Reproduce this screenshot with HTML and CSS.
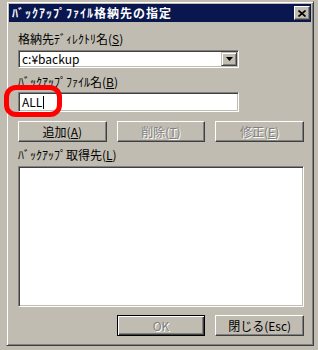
FILE: index.html
```html
<!DOCTYPE html>
<html lang="ja">
<head>
    <meta charset="UTF-8">
    <title>ﾊﾞｯｸｱｯﾌﾟﾌｧｲﾙ格納先の指定</title>
    <link rel="stylesheet" href="styles.css">
</head>
<body>

    <div class="window">
        <div class="caption">
            <span class="caption-title">ﾊﾞｯｸｱｯﾌﾟﾌｧｲﾙ格納先の指定</span>
            <span class="caption-close">
                <svg width="8" height="7" viewBox="0 0 8 7">
                    <path d="M0.5 0.5 L7.5 6.5 M7.5 0.5 L0.5 6.5" stroke="#000" stroke-width="1.6" fill="none"/>
                </svg>
            </span>
        </div>

        <div class="dialog">
            <div class="label">格納先ﾃﾞｨﾚｸﾄﾘ名(<u>S</u>)</div>
            <div class="combo sunken">
                <span class="combo-text">c:¥backup</span>
                <span class="combo-btn">
                    <svg width="7" height="4" viewBox="0 0 7 4"><polygon points="0,0 7,0 3.5,4" fill="#000"/></svg>
                </span>
            </div>

            <div class="label label-second">ﾊﾞｯｸｱｯﾌﾟﾌｧｲﾙ名(<u>B</u>)</div>
            <div class="textbox sunken">ALL<span class="caret"></span></div>

            <div class="btn-row">
                <div class="btn">追加(<u>A</u>)</div>
                <div class="btn disabled">削除(<u>T</u>)</div>
                <div class="btn disabled">修正(<u>E</u>)</div>
            </div>

            <div class="label label-third">ﾊﾞｯｸｱｯﾌﾟ取得先(<u>L</u>)</div>
            <div class="listbox sunken"></div>

            <div class="btn-row btn-row-bottom">
                <div></div>
                <div class="btn btn-default disabled">OK</div>
                <div class="btn">閉じる(Esc)</div>
            </div>
        </div>
    </div>

    <div class="highlight"></div>

</body>
</html>
```

FILE: styles.css
```css
body {
    margin: 0;
    background: #c0bcb1;
    font-family: "Noto Sans CJK JP", "Liberation Sans", sans-serif;
    font-size: 12px;
    color: #000;
    height: 350px;
    overflow: hidden;
    position: relative;
}
.window {
    margin: 1px 0 0 6px;
    width: 308px;
    box-sizing: border-box;
    border: 1px solid;
    border-color: #c0bcb1 #404040 #404040 #c0bcb1;
    box-shadow: inset 1px 1px #fff, inset -1px -1px #808080;
    padding: 2px;
    background: #c0bcb1;
}
.caption {
    height: 18px;
    background: #0a174f;
    display: flex;
    align-items: center;
    justify-content: space-between;
    padding-left: 3px;
}
.caption-title {
    color: #fff;
    font-weight: bold;
    font-size: 12px;
    letter-spacing: 1px;
    line-height: 14px;
}
.caption-close {
    width: 16px;
    height: 14px;
    box-sizing: border-box;
    margin-right: 1px;
    background: #c0bcb1;
    border: 1px solid;
    border-color: #fff #404040 #404040 #fff;
    box-shadow: inset -1px -1px #808080;
    display: flex;
    align-items: center;
    justify-content: center;
}
.dialog {
    padding: 10px 7px 7px 9px;
}
.label {
    line-height: 14px;
    height: 14px;
    white-space: nowrap;
}
.label-second { margin-top: 7px; }
.label-third { margin-top: 6px; }
.sunken {
    box-sizing: border-box;
    background: #fff;
    border: 1px solid;
    border-color: #808080 #fff #fff #808080;
    box-shadow: inset 1px 1px #404040, inset -1px -1px #c0bcb1;
}
.combo {
    margin-top: 4px;
    width: 221px;
    height: 18px;
    display: flex;
    align-items: center;
    justify-content: space-between;
    padding: 1px;
}
.combo-text {
    padding-left: 2px;
    line-height: 14px;
}
.combo-btn {
    width: 16px;
    height: 14px;
    box-sizing: border-box;
    background: #c0bcb1;
    border: 1px solid;
    border-color: #c0bcb1 #404040 #404040 #c0bcb1;
    box-shadow: inset 1px 1px #fff, inset -1px -1px #808080;
    display: flex;
    align-items: center;
    justify-content: center;
}
.textbox {
    margin-top: 3px;
    width: 221px;
    height: 20px;
    padding: 0 3px;
    display: flex;
    align-items: center;
    line-height: 14px;
}
.caret {
    display: inline-block;
    width: 1px;
    height: 13px;
    background: #000;
    margin-left: 1px;
}
.btn-row {
    margin-top: 9px;
    display: grid;
    grid-template-columns: repeat(3, 1fr);
    gap: 10px;
}
.btn-row-bottom { margin-top: 8px; }
.btn {
    height: 21px;
    box-sizing: border-box;
    background: #c0bcb1;
    border: 1px solid;
    border-color: #fff #404040 #404040 #fff;
    box-shadow: inset -1px -1px #808080;
    display: flex;
    align-items: center;
    justify-content: center;
    line-height: 14px;
    white-space: nowrap;
}
.btn-default {
    border-color: #000;
    box-shadow: inset 1px 1px #fff, inset -1px -1px #404040, inset -2px -2px #808080;
}
.disabled {
    color: #808080;
    text-shadow: 1px 1px #fff;
}
.listbox {
    margin-top: 4px;
    height: 141px;
}
.highlight {
    position: absolute;
    left: 4px;
    top: 85px;
    width: 58px;
    height: 32px;
    box-sizing: border-box;
    border: 5px solid #f00;
    border-radius: 12px;
}
```
